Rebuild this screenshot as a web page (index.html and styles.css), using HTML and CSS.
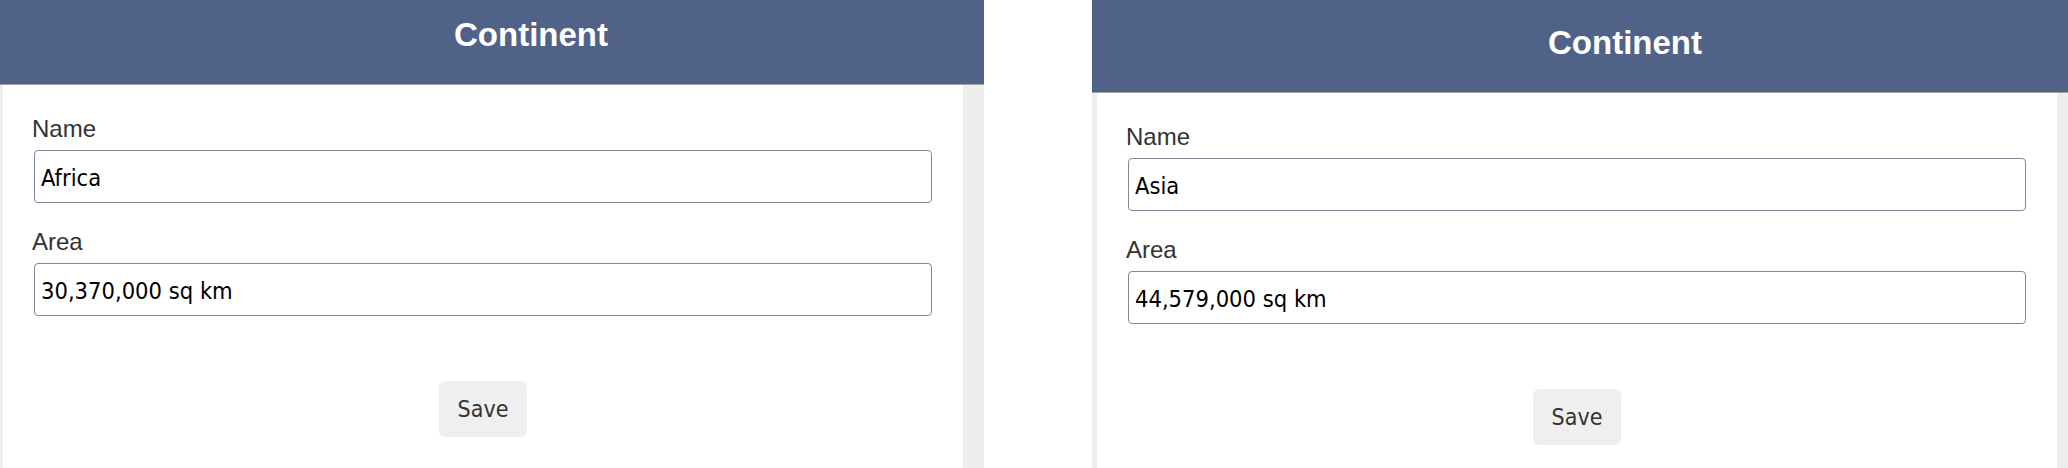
FILE: index.html
```html
<!DOCTYPE html>
<html lang="en">
<head>
<meta charset="UTF-8" />
<title>Continent</title>
<link rel="stylesheet" href="styles.css">
</head>
<body>
  <div class="frame frame-left">
    <div class="page scrolled">
      <header class="bar">Continent</header>
      <form class="card">
        <label class="field-label" for="name1">Name</label>
        <input class="field" id="name1" type="text" value="Africa">
        <label class="field-label" for="area1">Area</label>
        <input class="field" id="area1" type="text" value="30,370,000 sq km">
        <div class="actions">
          <button class="save" type="button">Save</button>
        </div>
      </form>
    </div>
  </div>

  <div class="frame frame-right">
    <div class="page">
      <header class="bar">Continent</header>
      <form class="card">
        <label class="field-label" for="name2">Name</label>
        <input class="field" id="name2" type="text" value="Asia">
        <label class="field-label" for="area2">Area</label>
        <input class="field" id="area2" type="text" value="44,579,000 sq km">
        <div class="actions">
          <button class="save" type="button">Save</button>
        </div>
      </form>
    </div>
  </div>
</body>
</html>
```

FILE: styles.css
```css
* {
  box-sizing: border-box;
}
html, body {
  margin: 0;
  padding: 0;
  height: 100%;
  background: #ffffff;
  overflow: hidden;
}
body {
  display: flex;
  font-family: 'Liberation Sans', Arial, sans-serif;
}

/* each window */
.frame {
  height: 468px;
  overflow: hidden;
}
.frame-left {
  width: 986px;
  margin-left: -2px;
  flex: none;
}
.frame-right {
  margin-left: 108px;
  flex: 1;
}

.page {
  width: 1066px;
  min-height: 480px;
  background: #eeeeee;
}
.page.scrolled {
  margin-top: -8px;
}

.bar {
  height: 93px;
  line-height: 86px;
  background: #516288;
  border-bottom: 1px solid #a3a3a3;
  color: #ffffff;
  text-align: center;
  font-size: 33px;
  font-weight: 700;
}

.card {
  display: flex;
  flex-direction: column;
  width: 960px;
  min-height: 400px;
  margin-left: 5px;
  padding: 30px 31px 0;
  background: #ffffff;
}

.field-label {
  color: #333333;
  font-size: 24px;
  line-height: 28px;
  margin-left: -2px;
  margin-bottom: 7px;
}
.field {
  width: 100%;
  height: 53px;
  margin: 0 0 25px;
  padding: 3px 6px 0;
  border: 1px solid #86869a;
  border-radius: 4px;
  font-family: 'DejaVu Sans Condensed', 'DejaVu Sans', sans-serif;
  font-size: 23.5px;
  color: #000000;
  background: #ffffff;
}

.actions {
  display: flex;
  justify-content: center;
  padding-top: 40px;
}
.save {
  width: 88px;
  height: 56px;
  border: none;
  border-radius: 6px;
  background: #efefef;
  color: #333333;
  font-family: 'DejaVu Sans Condensed', 'DejaVu Sans', sans-serif;
  font-size: 23px;
  cursor: pointer;
}
```
